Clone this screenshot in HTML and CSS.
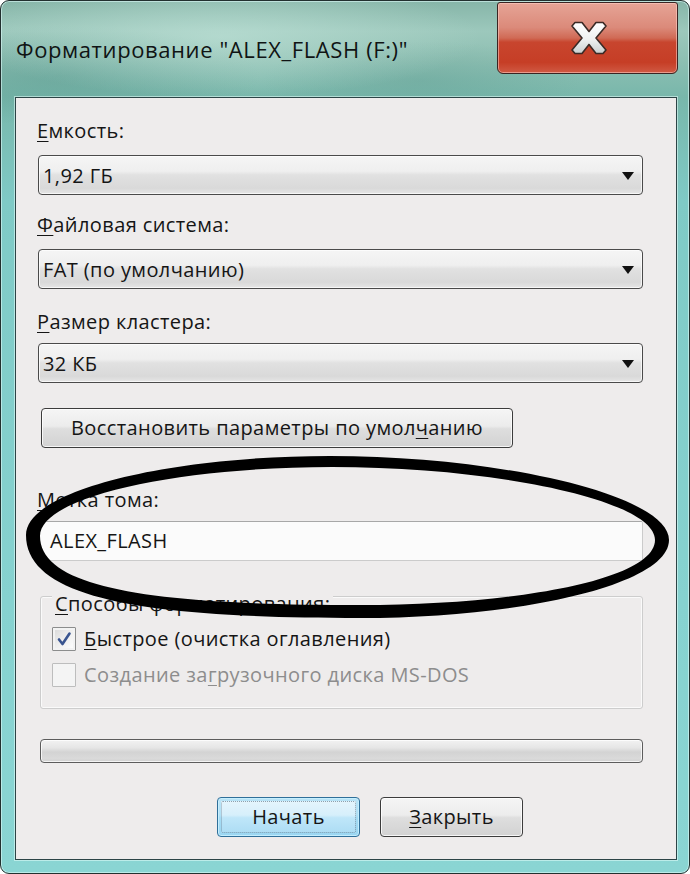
FILE: index.html
```html
<!DOCTYPE html>
<html lang="ru">
<head>
<meta charset="utf-8">
<title>Форматирование</title>
<link rel="stylesheet" href="styles.css">
</head>
<body>
<div class="window">
  <div class="titlebar">
    <div class="title">Форматирование "ALEX_FLASH (F:)"</div>
    <div class="close">
      <svg class="close-x" width="38" height="34" viewBox="0 0 38 34">
        <defs>
          <linearGradient id="xg" x1="0" y1="0" x2="0" y2="1">
            <stop offset="0" stop-color="#ffffff"/>
            <stop offset="0.55" stop-color="#eef0f0"/>
            <stop offset="1" stop-color="#c9cfd0"/>
          </linearGradient>
        </defs>
        <path d="M2 5 L5 1.5 L12 1.5 L19 10.5 L26 1.5 L33 1.5 L36 5 L26 17 L36 29 L33 32.5 L26 32.5 L19 23.5 L12 32.5 L5 32.5 L2 29 L12 17 Z" fill="url(#xg)" stroke="#3b2a26" stroke-width="1.6" stroke-linejoin="round"/>
      </svg>
    </div>
  </div>
  <div class="panel">
    <div class="label"><u>Е</u>мкость:</div>
    <div class="combo combo-first"><span class="combo-text">1,92 ГБ</span><i class="arrow"></i></div>
    <div class="label label-fs"><u>Ф</u>айловая система:</div>
    <div class="combo"><span class="combo-text">FAT (по умолчанию)</span><i class="arrow"></i></div>
    <div class="label label-cluster"><u>Р</u>азмер кластера:</div>
    <div class="combo combo-cluster"><span class="combo-text">32 КБ</span><i class="arrow"></i></div>
    <div class="btn restore">Восстановить параметры по умол<u>ч</u>анию</div>
    <div class="label label-volume"><u>М</u>етка тома:</div>
    <div class="textbox">ALEX_FLASH</div>
    <div class="group">
      <div class="group-title"><u>С</u>пособы форматирования:</div>
      <div class="check-row row-first">
        <span class="checkbox">
          <svg width="22" height="22" viewBox="0 0 22 22"><path d="M6 11.5 L9.5 16 L16.5 5.5" fill="none" stroke="#3a5590" stroke-width="2.6" stroke-linecap="round" stroke-linejoin="round"/></svg>
        </span>
        <span class="check-text"><u>Б</u>ыстрое (очистка оглавления)</span>
      </div>
      <div class="check-row disabled">
        <span class="checkbox"></span>
        <span class="check-text">Создание за<u>г</u>рузочного диска MS-DOS</span>
      </div>
    </div>
    <div class="progress"></div>
    <div class="buttons">
      <div class="btn default">Начать</div>
      <div class="btn"><u>З</u>акрыть</div>
    </div>
  </div>
  <svg class="ellipse" width="690" height="874" viewBox="0 0 690 874">
    <path fill="#000" fill-rule="evenodd" d="M26 535 C26 490 170 456 330 456 C500 456 669 495 669 540 C669 585 520 618 360 618 C150 618 26 600 26 535 Z M40 536 C40 496 180 467 332 467 C495 467 655 500 655 540 C655 580 515 605 360 605 C160 605 40 590 40 536 Z"/>
  </svg>
</div>
</body>
</html>
```

FILE: styles.css
```css
html, body {
  margin: 0;
  padding: 0;
  background: #ffffff;
}

body {
  font-family: "Open Sans", "Noto Sans", "DejaVu Sans", sans-serif;
  color: #151515;
  letter-spacing: 0.4px;
}

u {
  text-decoration: underline;
  text-decoration-thickness: 1px;
  text-underline-offset: 3px;
}

.window {
  position: relative;
  width: 690px;
  height: 874px;
  box-sizing: border-box;
  border: 1px solid #22302f;
  border-radius: 9px;
  padding: 0 12px 13px 14px;
  display: flex;
  flex-direction: column;
  overflow: hidden;
  background:
    radial-gradient(ellipse 260px 60px at 220px 36px, rgba(200, 232, 222, 0.55), rgba(200, 232, 222, 0) 100%),
    radial-gradient(ellipse 200px 50px at 60px 75px, rgba(80, 145, 135, 0.4), rgba(80, 145, 135, 0) 100%),
    radial-gradient(ellipse 160px 40px at 420px 80px, rgba(90, 150, 140, 0.3), rgba(90, 150, 140, 0) 100%),
    linear-gradient(to bottom, #86b5a8 0px, #9cc8bc 30px, #8dbfb2 60px, #78b7ab 96px, #7fcac6 200px, #86d2d0 600px, #8ad5d3 100%);
  box-shadow: inset 0 0 0 1px rgba(220, 250, 248, 0.6);
}

.titlebar {
  height: 96px;
  display: flex;
  align-items: flex-start;
  justify-content: space-between;
}

.title {
  margin-top: 34px;
  margin-left: 1px;
  font-size: 22px;
  line-height: 28px;
  color: #101414;
  letter-spacing: 0.6px;
}

.close {
  width: 181px;
  height: 72px;
  margin-top: 1px;
  margin-right: -1px;
  box-sizing: border-box;
  border: 1px solid #3a2422;
  border-radius: 3px 3px 6px 6px;
  background: linear-gradient(to bottom, #e6a496 0%, #db8a7a 35%, #d06a55 50%, #c8452e 56%, #c63e26 85%, #d05a44 100%);
  box-shadow: inset 0 0 0 1px rgba(255, 210, 200, 0.55);
  display: flex;
  align-items: center;
  justify-content: center;
}

.close-x {
  display: block;
  margin-left: 2px;
}

.panel {
  flex: 1;
  border: 1px solid #2c4446;
  background: #eeecec;
  padding: 20px 33px 22px 22px;
  display: flex;
  flex-direction: column;
  box-shadow: 0 0 0 1px rgba(230, 255, 252, 0.55);
}

.label {
  font-size: 20px;
  line-height: 26px;
  margin-left: -1px;
}

.label-fs { margin-top: 17px; }
.label-cluster { margin-top: 20px; }
.label-volume { margin-top: 39px; }

.combo {
  height: 40px;
  box-sizing: border-box;
  margin-top: 11px;
  border: 1px solid #4a4a4a;
  border-radius: 4px;
  background: linear-gradient(to bottom, #f5f5f5 0%, #efefef 40%, #e1e1e1 50%, #d9d9d9 85%, #e6e6e6 100%);
  box-shadow: inset 0 0 0 1px rgba(255, 255, 255, 0.7);
  display: flex;
  align-items: center;
  justify-content: space-between;
  padding: 0 8px 0 4px;
}

.combo-cluster { margin-top: 8px; }

.combo-text {
  font-size: 20px;
  line-height: 26px;
  margin-top: 1px;
}

.arrow {
  width: 0;
  height: 0;
  border-left: 6.5px solid transparent;
  border-right: 6.5px solid transparent;
  border-top: 8px solid #111;
  margin-top: 2px;
}

.btn {
  box-sizing: border-box;
  height: 40px;
  border: 1px solid #3c3c3c;
  border-radius: 4px;
  background: linear-gradient(to bottom, #f5f5f5 0%, #ececec 45%, #dedede 52%, #d2d2d2 100%);
  box-shadow: inset 0 0 0 1px rgba(255, 255, 255, 0.8);
  font-size: 20px;
  line-height: 26px;
  display: flex;
  align-items: center;
  justify-content: center;
  color: #151515;
  position: relative;
}

.restore {
  margin-top: 25px;
  margin-left: 3px;
  width: 472px;
}

.textbox {
  margin-top: 8px;
  height: 40px;
  box-sizing: border-box;
  border: 1px solid #cbcbcb;
  border-top-color: #a7a7a7;
  border-radius: 2px;
  background: #fbfbfb;
  padding: 0 10px;
  font-size: 20px;
  line-height: 26px;
  display: flex;
  align-items: center;
  margin-left: 1px;
}

.group {
  margin-top: 35px;
  margin-left: 2px;
  border: 1px solid #cdcdcd;
  border-radius: 3px;
  box-shadow: inset 0 0 0 1px #fafafa;
  padding: 0 0 20px 11px;
  display: flex;
  flex-direction: column;
  align-items: flex-start;
}

.group-title {
  margin-top: -6px;
  padding: 0 3px;
  background: #eeecec;
  font-size: 20px;
  line-height: 26px;
}

.check-row {
  display: flex;
  align-items: center;
  height: 26px;
  margin-top: 10px;
}

.row-first { margin-top: 9px; }

.checkbox {
  width: 24px;
  height: 24px;
  box-sizing: border-box;
  border: 1px solid #8c8d8d;
  border-radius: 1px;
  background: linear-gradient(135deg, #d8d8d8 0%, #efefef 50%, #ffffff 100%);
  box-shadow: inset 0 0 0 2px #f3f3f3;
  display: flex;
  align-items: center;
  justify-content: center;
}

.check-text {
  margin-left: 8px;
  font-size: 20px;
  line-height: 26px;
}

.disabled .checkbox {
  border-color: #bdbdbd;
  background: #f4f4f4;
  box-shadow: none;
}

.disabled .check-text {
  color: #8d8d8d;
}

.progress {
  margin-top: 30px;
  margin-left: 2px;
  height: 24px;
  box-sizing: border-box;
  border: 1px solid #5c5c5c;
  border-radius: 4px;
  background: linear-gradient(to bottom, #f2f2f2 0%, #e6e6e6 35%, #d3d3d3 55%, #dadada 85%, #cfcfcf 100%);
  box-shadow: inset 0 0 0 1px rgba(255, 255, 255, 0.75);
}

.buttons {
  margin-top: 34px;
  margin-left: 179px;
  display: flex;
  gap: 20px;
}

.buttons .btn {
  width: 143px;
}

.btn.default {
  border-color: #2f6f99;
  background: linear-gradient(to bottom, #e8f6fd 0%, #d6effb 45%, #bfe6f9 52%, #a9dbf3 100%);
  box-shadow: inset 0 0 0 1px rgba(200, 240, 255, 0.9), inset 0 0 0 3px rgba(140, 210, 240, 0.5);
}

.btn.default::after {
  content: "";
  position: absolute;
  left: 3px;
  right: 3px;
  top: 3px;
  bottom: 3px;
  border: 1px dotted rgba(40, 60, 80, 0.45);
  border-radius: 2px;
}

.ellipse {
  position: absolute;
  left: -1px;
  top: -1px;
  pointer-events: none;
}
```
